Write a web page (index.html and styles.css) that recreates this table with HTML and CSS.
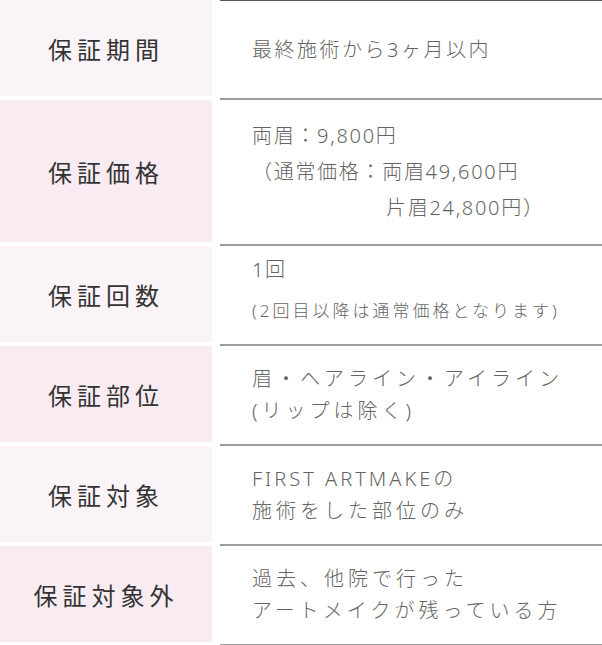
FILE: index.html
```html
<!DOCTYPE html>
<html lang="ja">
<head>
<meta charset="utf-8">
<title>保証内容</title>
<link rel="stylesheet" href="styles.css">
</head>
<body>
<div class="table">
  <div class="row first">
    <div class="head odd">保証期間</div>
    <div class="val"><p class="period">最終施術から3ヶ月以内</p></div>
  </div>
  <div class="row price">
    <div class="head even">保証価格</div>
    <div class="val">
      <p class="tight">両眉：9,800円</p>
      <p class="tight">（通常価格：両眉49,600円</p>
      <p class="tight indent">片眉24,800円）</p>
    </div>
  </div>
  <div class="row count">
    <div class="head odd">保証回数</div>
    <div class="val">
      <p class="tight">1回</p>
      <p class="small">(2回目以降は通常価格となります)</p>
    </div>
  </div>
  <div class="row">
    <div class="head even">保証部位</div>
    <div class="val">
      <p class="wide">眉・ヘアライン・アイライン</p>
      <p class="wide">(リップは除く)</p>
    </div>
  </div>
  <div class="row">
    <div class="head odd">保証対象</div>
    <div class="val">
      <p class="wide latin">FIRST ARTMAKEの</p>
      <p class="wide">施術をした部位のみ</p>
    </div>
  </div>
  <div class="row">
    <div class="head even">保証対象外</div>
    <div class="val">
      <p class="wide">過去、他院で行った</p>
      <p class="wide">アートメイクが残っている方</p>
    </div>
  </div>
</div>
</body>
</html>
```

FILE: styles.css
```css
html, body {
  margin: 0;
  padding: 0;
  background: #fff;
}

body {
  font-family: "Noto Sans", "Noto Sans CJK JP", sans-serif;
  color: #555;
}

.table {
  width: 602px;
}

.row {
  display: grid;
  grid-template-columns: 212px 1fr;
  column-gap: 8px;
  min-height: 100px;
}

.head {
  margin-bottom: 4px;
  display: flex;
  align-items: center;
  justify-content: center;
  font-family: "Noto Sans CJK JP", sans-serif;
  font-size: 24px;
  font-weight: 400;
  letter-spacing: 5px;
  color: #333;
}

.head.odd {
  background: #faf4f8;
}

.head.even {
  background: #f8ecf2;
}

.val {
  border-bottom: 2px solid #9c9c9c;
  padding: 17px 0 17px 32px;
  display: flex;
  flex-direction: column;
  justify-content: center;
}

.first .val {
  border-top: 1px solid #555;
}

.val p {
  margin: 0;
  font-size: 20px;
  line-height: 32px;
  font-weight: 300;
  color: #646464;
  white-space: nowrap;
}

.tight {
  letter-spacing: 1.7px;
}

.period {
  letter-spacing: 2.5px;
}

.price .val {
  padding-top: 18px;
  padding-bottom: 18px;
}

.price .val p {
  line-height: 36px;
}

.indent {
  padding-left: 134px;
}

.count .val {
  padding-top: 8px;
  padding-bottom: 17px;
  justify-content: flex-start;
}

.val p.small {
  font-size: 17px;
  letter-spacing: 3px;
  margin-top: 9px;
}

.wide {
  letter-spacing: 4px;
}

.val p.latin {
  letter-spacing: 3px;
}
```
